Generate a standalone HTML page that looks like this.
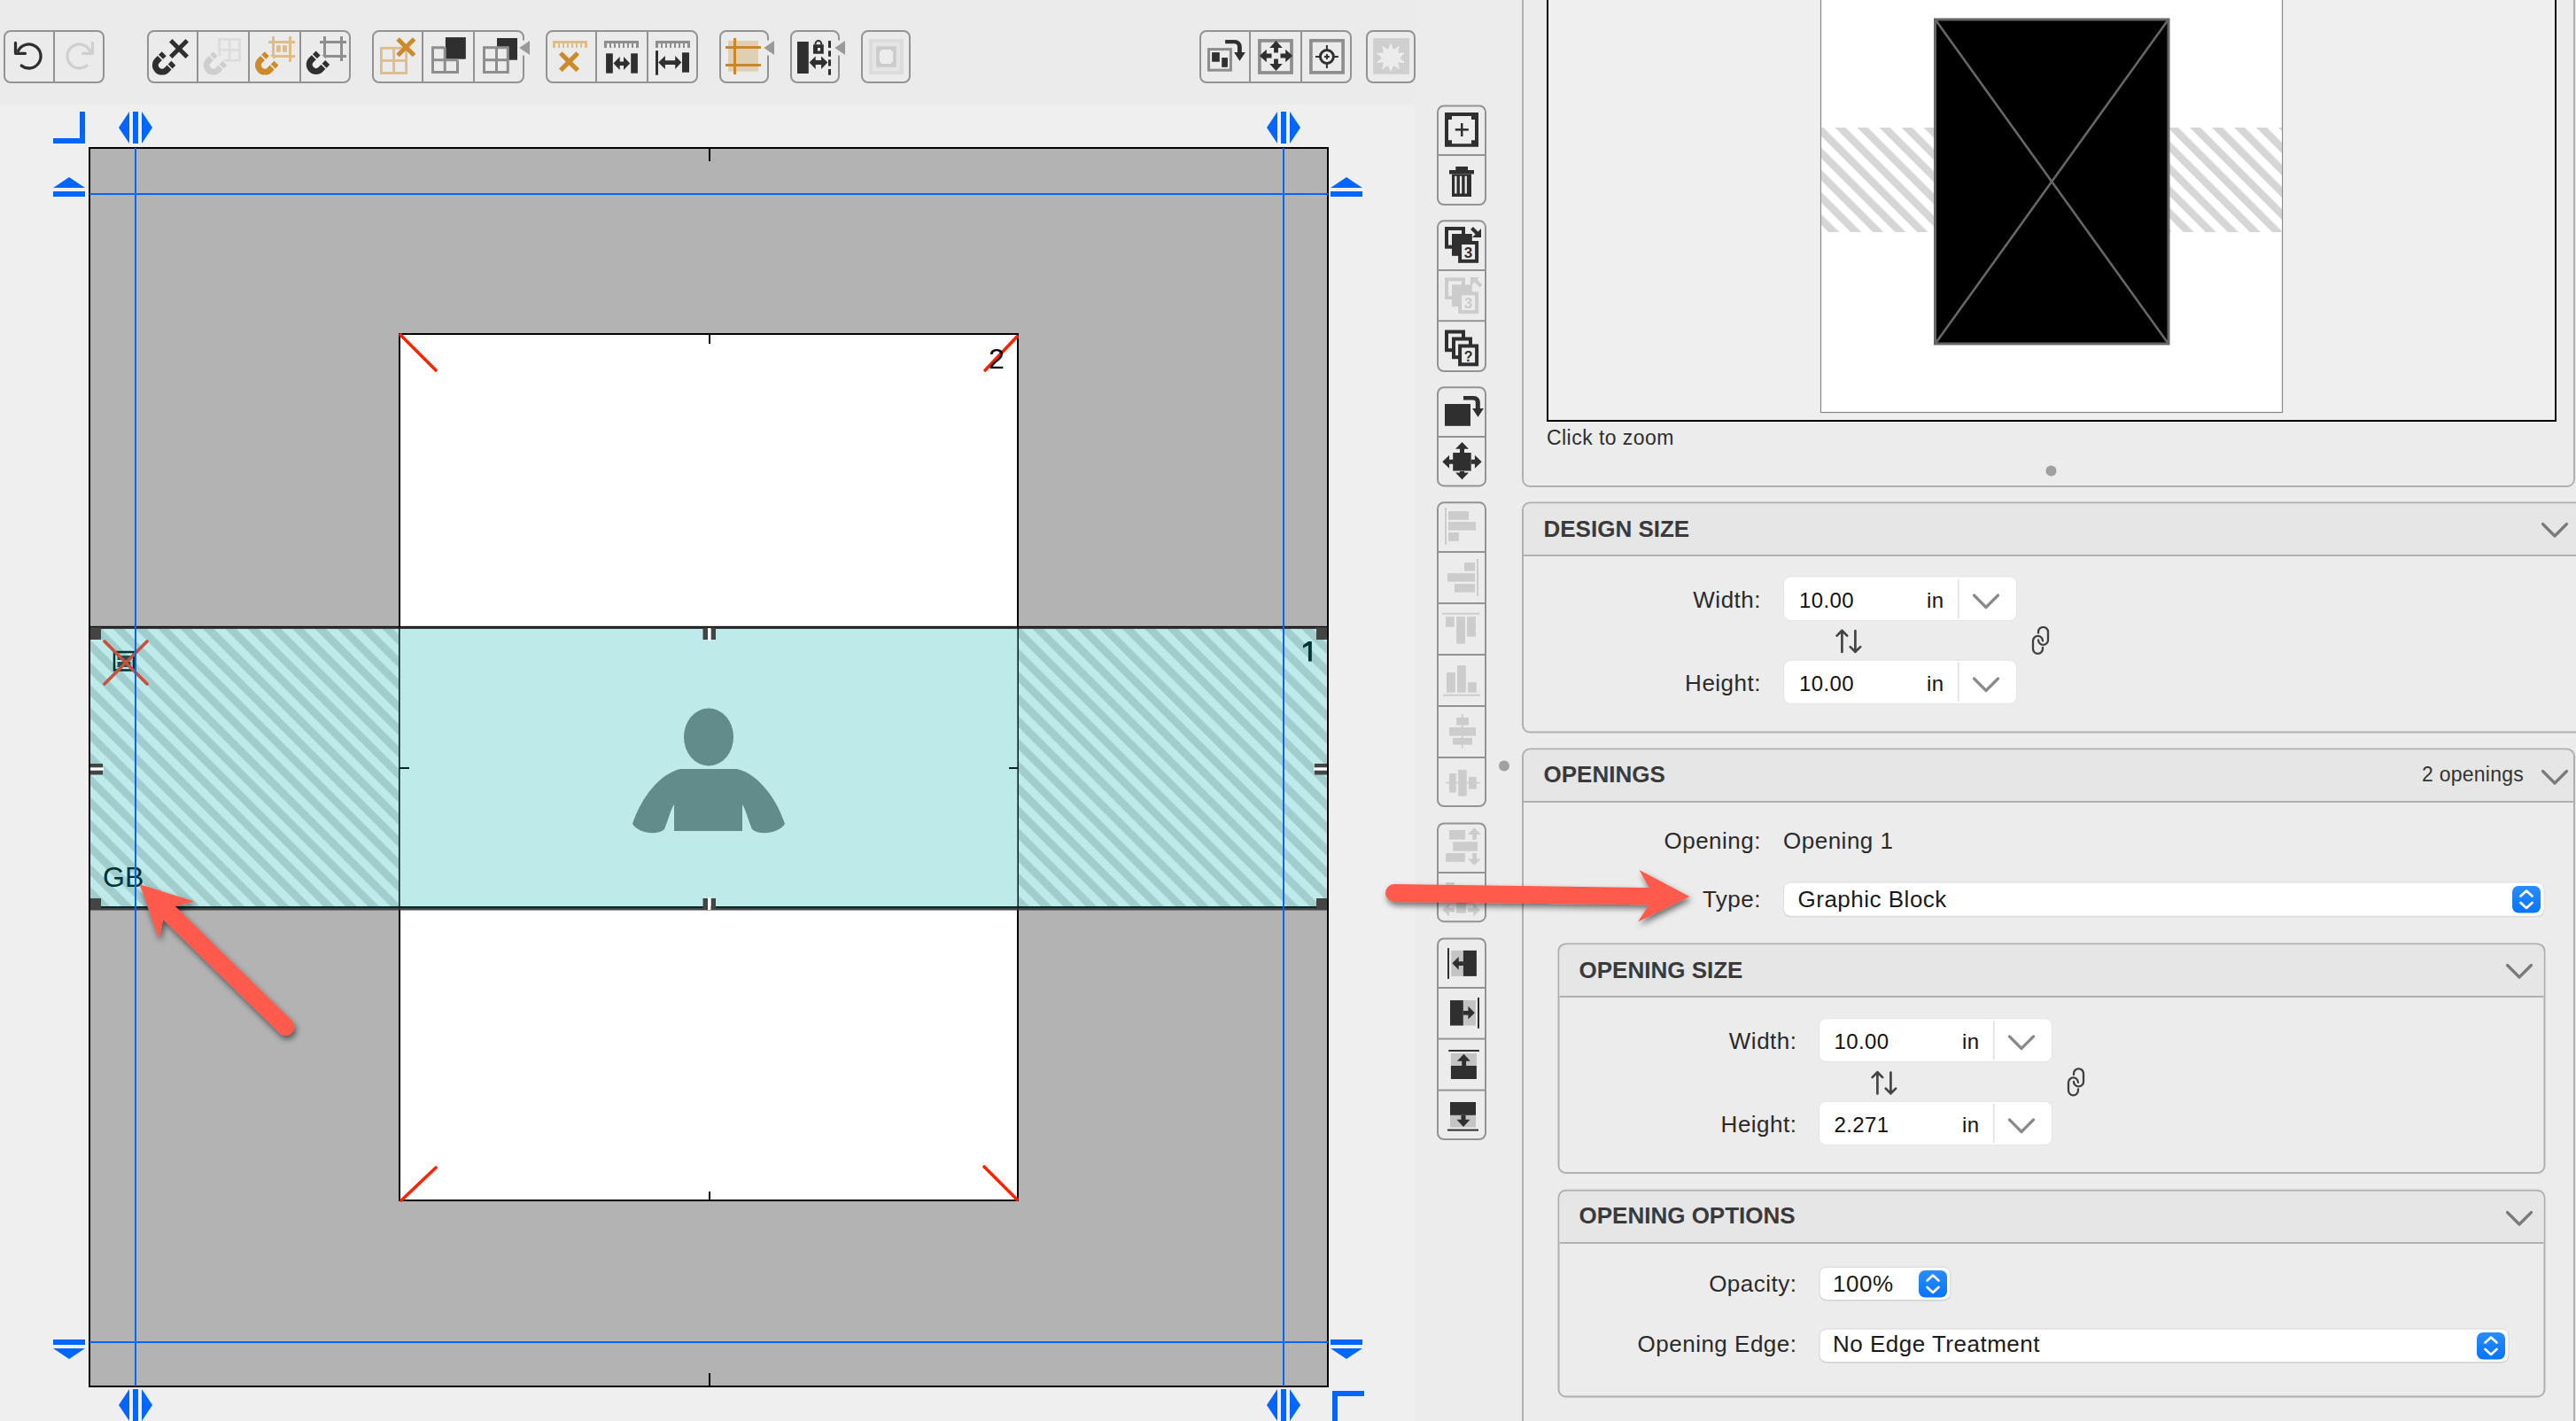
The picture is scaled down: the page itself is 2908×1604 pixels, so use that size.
<!DOCTYPE html>
<html><head><meta charset="utf-8">
<style>
html,body{margin:0;padding:0;width:2908px;height:1604px;overflow:hidden;background:#ececec;}
svg{display:block;position:absolute;left:0;top:0;}
text{font-family:"Liberation Sans",sans-serif;}
</style></head>
<body>
<svg width="2908" height="1604" viewBox="0 0 2908 1604">
<defs>
  <pattern id="stripeC" patternUnits="userSpaceOnUse" width="17.9" height="17.9" patternTransform="rotate(-45)">
    <rect width="17.9" height="17.9" fill="#bfeaea"/>
    <rect x="0" width="8.8" height="17.9" fill="#a2cdcd"/>
  </pattern>
  <pattern id="stripeG" patternUnits="userSpaceOnUse" width="17.7" height="17.7" patternTransform="rotate(-45)">
    <rect width="17.7" height="17.7" fill="#ffffff"/>
    <rect x="0" width="8.5" height="17.7" fill="#d6d6d6"/>
  </pattern>
  <filter id="ashadow" x="-20%" y="-20%" width="140%" height="140%">
    <feGaussianBlur in="SourceAlpha" stdDeviation="3.5"/>
    <feOffset dx="2" dy="4" result="b"/>
    <feComponentTransfer><feFuncA type="linear" slope="0.55"/></feComponentTransfer>
    <feMerge><feMergeNode/><feMergeNode in="SourceGraphic"/></feMerge>
  </filter>

  <symbol id="magnet" overflow="visible">
    <g transform="rotate(-45)">
      <path d="M0,-11 A11,11 0 0 0 0,11 L4,11 L4,4 L0,4 A4,4 0 0 1 0,-4 L4,-4 L4,-11 Z"/>
      <rect x="5.6" y="-11" width="5.2" height="7"/>
      <rect x="5.6" y="4" width="5.2" height="7"/>
    </g>
  </symbol>
  <symbol id="magnetHalo" overflow="visible">
    <g transform="rotate(-45)" fill="#ececec">
      <path d="M0,-12.5 A12.5,12.5 0 0 0 0,12.5 L12.3,12.5 L12.3,-12.5 Z"/>
    </g>
  </symbol>
  <symbol id="xmark" overflow="visible">
    <path d="M-11,-7.5 L-7.5,-11 L0,-3.5 L7.5,-11 L11,-7.5 L3.5,0 L11,7.5 L7.5,11 L0,3.5 L-7.5,11 L-11,7.5 L-3.5,0 Z"/>
  </symbol>
</defs>

<!-- ========== BACKGROUNDS ========== -->
<rect x="0" y="0" width="2908" height="1604" fill="#ececec"/>
<rect x="0" y="0" width="1598" height="118" fill="#ebebeb"/>
<rect x="0" y="118" width="1598" height="1486" fill="#efefef"/>


<!-- ========== TOP TOOLBAR ========== -->
<g id="toolbar">
  <g fill="none" stroke="#939393" stroke-width="2">
    <rect x="5" y="35" width="112" height="58" rx="7"/>
    <rect x="167" y="35" width="228" height="58" rx="7"/>
    <rect x="421" y="35" width="170" height="58" rx="7"/>
    <rect x="617" y="35" width="170" height="58" rx="7"/>
    <rect x="813" y="35" width="54" height="58" rx="7"/>
    <rect x="893" y="35" width="54" height="58" rx="7"/>
    <rect x="973" y="35" width="54" height="58" rx="7"/>
    <rect x="1355" y="35" width="170" height="58" rx="7"/>
    <rect x="1543" y="35" width="54" height="58" rx="7"/>
  </g>
  <g fill="#939393">
    <rect x="60" y="35" width="2" height="58"/>
    <rect x="222" y="35" width="2" height="58"/>
    <rect x="280" y="35" width="2" height="58"/>
    <rect x="338" y="35" width="2" height="58"/>
    <rect x="476" y="35" width="2" height="58"/>
    <rect x="534" y="35" width="2" height="58"/>
    <rect x="672" y="35" width="2" height="58"/>
    <rect x="730" y="35" width="2" height="58"/>
    <rect x="1410" y="35" width="2" height="58"/>
    <rect x="1468" y="35" width="2" height="58"/>
  </g>
  <!-- gaps + triangles -->
  <g fill="#ebebeb">
    <rect x="588" y="45.5" width="6" height="17"/>
    <rect x="864" y="45.5" width="6" height="17"/>
    <rect x="944" y="45.5" width="6" height="17"/>
  </g>
  <g fill="#999">
    <path d="M586.2,54 L598,46 L598,62 Z"/>
    <path d="M862.4,54 L874,46 L874,62 Z"/>
    <path d="M942.4,54 L954,46 L954,62 Z"/>
  </g>

  <!-- undo / redo -->
  <g fill="none" stroke-width="3.3" stroke-linecap="round" stroke-linejoin="round">
    <g stroke="#2e2e2e">
      <path d="M24.2,74.1 A13.5,13.5 0 1 0 20.5,57.4"/>
      <path d="M17.5,48.5 L17.5,60.3 L28.5,60.3"/>
    </g>
    <g stroke="#cfcfcf">
      <path d="M97.8,74.1 A13.5,13.5 0 1 1 101.5,57.4"/>
      <path d="M104.5,48.5 L104.5,60.3 L93.5,60.3"/>
    </g>
  </g>

  <!-- magnets group -->
  <g>
    <g fill="#2f2f2f"><use href="#xmark" x="202" y="55"/></g>
    <g fill="#2f2f2f"><use href="#magnet" x="182.9" y="73.6"/></g>
    <!-- btn2 disabled -->
    <g fill="none" stroke="#dcdcdc" stroke-width="2.7">
      <rect x="247.5" y="44.3" width="23" height="24"/>
      <line x1="259.2" y1="44.3" x2="259.2" y2="68.3"/>
      <line x1="247.5" y1="56.3" x2="270.5" y2="56.3"/>
    </g>
    <use href="#magnetHalo" x="240.8" y="73.6"/>
    <g fill="#cecece"><use href="#magnet" x="240.8" y="73.6"/></g>
    <!-- btn3 orange -->
    <g fill="#dfbd8a">
      <rect x="307" y="41" width="3" height="29"/>
      <rect x="326" y="41" width="3" height="29"/>
      <rect x="303" y="46" width="30" height="3"/>
      <rect x="303" y="62" width="30" height="3"/>
      <rect x="312" y="51.2" width="4.8" height="7.6"/>
      <rect x="319" y="51.2" width="5" height="7.6"/>
    </g>
    <use href="#magnetHalo" x="299" y="73.6"/>
    <g fill="#cc8a2c"><use href="#magnet" x="299" y="73.6"/></g>
    <!-- btn4 -->
    <g fill="#8e8e8e">
      <rect x="365" y="41" width="3" height="28"/>
      <rect x="384" y="41" width="3" height="28"/>
      <rect x="361" y="46" width="30" height="3"/>
      <rect x="361" y="62" width="30" height="3"/>
    </g>
    <use href="#magnetHalo" x="356.8" y="72.9"/>
    <g fill="#2f2f2f"><use href="#magnet" x="356.8" y="72.9"/></g>
  </g>

  <!-- grid group -->
  <g>
    <g fill="none" stroke="#dfbd8a" stroke-width="2.8">
      <rect x="430.4" y="54.3" width="28.2" height="28.2"/>
      <line x1="444.6" y1="54.3" x2="444.6" y2="82.5"/>
      <line x1="430.4" y1="68.4" x2="458.6" y2="68.4"/>
    </g>
    <g fill="#cc8a2c"><use href="#xmark" x="458.3" y="53.2"/></g>
    <rect x="502.9" y="42.1" width="22.9" height="24.6" fill="#2f2f2f"/>
    <g fill="none" stroke="#8e8e8e" stroke-width="3">
      <path d="M502.2,53.7 L488.5,53.7 L488.5,81.5 L516.5,81.5 L516.5,67.7"/>
      <line x1="502.2" y1="53.7" x2="502.2" y2="81.5"/>
      <line x1="488.5" y1="67.7" x2="516.5" y2="67.7"/>
    </g>
    <rect x="561" y="43" width="23" height="24.7" fill="#2f2f2f"/>
    <g fill="none" stroke="#8e8e8e" stroke-width="3">
      <rect x="546.5" y="53.7" width="26.8" height="27.8" fill="#ececec"/>
      <line x1="560.5" y1="53.7" x2="560.5" y2="81.5"/>
      <line x1="546.5" y1="67.7" x2="573.3" y2="67.7"/>
    </g>
  </g>

  <!-- ruler group -->
  <g>
    <g fill="#dfbd8a">
      <rect x="624" y="46" width="39" height="3"/>
      <rect x="624" y="46" width="3" height="8"/><rect x="630" y="46" width="2" height="8"/><rect x="635" y="46" width="2" height="8"/><rect x="640" y="46" width="2" height="8"/><rect x="645" y="46" width="2" height="8"/><rect x="650" y="46" width="2" height="8"/><rect x="655" y="46" width="2" height="8"/><rect x="660" y="46" width="3" height="8"/>
    </g>
    <g fill="#cc8a2c"><use href="#xmark" x="642.5" y="69.7" transform="translate(642.5,69.7) scale(1.05) translate(-642.5,-69.7)"/></g>
    <g fill="#8e8e8e">
      <rect x="682" y="46" width="39" height="3"/>
      <rect x="682" y="46" width="3" height="8"/><rect x="688" y="46" width="2" height="8"/><rect x="693" y="46" width="2" height="8"/><rect x="698" y="46" width="2" height="8"/><rect x="703" y="46" width="2" height="8"/><rect x="708" y="46" width="2" height="8"/><rect x="713" y="46" width="2" height="8"/><rect x="718" y="46" width="3" height="8"/>
      <rect x="740" y="46" width="39" height="3"/>
      <rect x="740" y="46" width="3" height="8"/><rect x="746" y="46" width="2" height="8"/><rect x="751" y="46" width="2" height="8"/><rect x="756" y="46" width="2" height="8"/><rect x="761" y="46" width="2" height="8"/><rect x="766" y="46" width="2" height="8"/><rect x="771" y="46" width="2" height="8"/><rect x="776" y="46" width="3" height="8"/>
    </g>
    <g fill="#2f2f2f">
      <rect x="684.1" y="60.3" width="7.7" height="22.4"/>
      <rect x="712.2" y="60.3" width="7.7" height="22.4"/>
      <path d="M692.5,71.6 L699.7,64 L699.7,69.4 L704,69.4 L704,64 L711.2,71.6 L704,79 L704,74.1 L699.7,74.1 L699.7,79 Z"/>
      <rect x="740" y="57.1" width="3" height="27.6"/>
      <rect x="770" y="59.3" width="8" height="22.4"/>
      <path d="M743.2,70.6 L750.9,63 L750.9,68.2 L762.2,68.2 L762.2,63 L769.3,70.6 L762.2,78 L762.2,72.9 L750.9,72.9 L750.9,78 Z"/>
    </g>
  </g>

  <!-- btn A -->
  <rect x="822" y="46" width="34" height="34.7" fill="#e0d0b3"/>
  <g fill="#c9862a">
    <rect x="828" y="43" width="3" height="41"/>
    <rect x="819" y="52" width="40" height="3"/>
    <rect x="819" y="72" width="40" height="3"/>
  </g>
  <!-- btn B -->
  <g fill="#2f2f2f">
    <rect x="900" y="47" width="12.8" height="36"/>
    <path d="M919.5,50.5 L919.5,49.5 A4.4,4.4 0 0 1 928.3,49.5 L928.3,50.5 L926.3,50.5 L926.3,49.5 A2.4,2.4 0 0 0 921.5,49.5 L921.5,50.5 Z"/>
    <path d="M918,50.2 h11.8 v10.6 h-11.8 Z M923,54 v3.5 h3 v-3.5 Z" fill-rule="evenodd"/>
    <path d="M913.6,70.4 L920.7,63.5 L920.7,68 L927.1,68 L927.1,63.5 L934.3,70.4 L927.1,78 L927.1,72.9 L920.7,72.9 L920.7,78 Z"/>
    <rect x="935" y="46" width="3" height="8"/>
    <rect x="935" y="57.3" width="3" height="6.5"/>
    <rect x="935" y="67.3" width="3" height="7.2"/>
    <rect x="935" y="78" width="3" height="6.7"/>
  </g>
  <!-- btn C disabled -->
  <rect x="981" y="44" width="39" height="40" fill="#dcdcdc"/>
  <rect x="985" y="48" width="31" height="32" fill="#e5e5e5"/>
  <rect x="989.1" y="52.2" width="22.7" height="23.6" fill="#cccccc"/>
  <path d="M994.8,55.9 h11.3 v2 h2 v12.2 h-2 v2 h-11.3 v-2 h-2 v-12.2 h2 Z" fill="#ececec"/>

  <!-- R1 -->
  <g>
    <rect x="1364.5" y="55.6" width="24.9" height="23.6" fill="none" stroke="#8e8e8e" stroke-width="3"/>
    <g fill="#2f2f2f">
      <rect x="1368.1" y="59.1" width="8.7" height="10.6"/>
      <rect x="1379.2" y="65.1" width="6.7" height="10.7"/>
      <path d="M1383.1,45 L1394,45 A7.8,7.8 0 0 1 1401.8,52.8 L1401.8,60 L1397,60 L1397,53 A3.8,3.8 0 0 0 1393.2,49.2 L1383.1,49.2 Z"/>
      <path d="M1393.1,59.1 L1405.9,59.1 L1399.4,68.7 Z"/>
    </g>
  </g>
  <!-- R2 -->
  <g>
    <rect x="1421.9" y="45.9" width="36.1" height="36.1" fill="none" stroke="#8e8e8e" stroke-width="3.7"/>
    <path fill="#2f2f2f" d="M1440.5,46 L1447.8,53.9 L1442.9,53.9 L1442.9,59.6 L1438.1,59.6 L1438.1,53.9 L1433.2,53.9 Z
      M1440.5,80 L1447.8,72.1 L1442.9,72.1 L1442.9,66.4 L1438.1,66.4 L1438.1,72.1 L1433.2,72.1 Z
      M1421.9,63 L1429.8,55.7 L1429.8,60.6 L1435.5,60.6 L1435.5,65.4 L1429.8,65.4 L1429.8,70.3 Z
      M1459.1,63 L1451.2,55.7 L1451.2,60.6 L1445.5,60.6 L1445.5,65.4 L1451.2,65.4 L1451.2,70.3 Z"/>
  </g>
  <!-- R3 -->
  <g>
    <rect x="1479.9" y="45.8" width="36.2" height="36.1" fill="none" stroke="#8e8e8e" stroke-width="3.7"/>
    <circle cx="1497.9" cy="64" r="7.5" fill="none" stroke="#2f2f2f" stroke-width="3"/>
    <g stroke="#2f2f2f" stroke-width="2">
      <line x1="1497.9" y1="51" x2="1497.9" y2="55.5"/>
      <line x1="1497.9" y1="72.5" x2="1497.9" y2="77"/>
      <line x1="1485" y1="64" x2="1489.5" y2="64"/>
      <line x1="1506.3" y1="64" x2="1510.8" y2="64"/>
      <line x1="1497.9" y1="61" x2="1497.9" y2="67"/>
      <line x1="1494.9" y1="64" x2="1500.9" y2="64"/>
    </g>
  </g>
  <!-- R4 disabled -->
  <rect x="1550.2" y="43.1" width="40.8" height="40.6" fill="#cfcfcf"/>
  <path fill="#ececec" d="M1570,48.5 L1573.1,56.1 L1579.8,51.6 L1578.2,59.5 L1586.2,59.7 L1580.3,65.2 L1586.2,70.9 L1578.3,70.4 L1579.9,78.4 L1573.2,73.9 L1570,81.2 L1566.8,73.9 L1560.1,78.4 L1561.7,70.4 L1553.8,70.9 L1559.7,65.2 L1553.8,59.7 L1561.8,59.5 L1560.2,51.6 L1566.9,56.1 Z"/>
</g>

<!-- ========== CANVAS ========== -->
<g id="canvas">
  <rect x="101" y="167" width="1398" height="1398" fill="#b3b3b3" stroke="#000" stroke-width="2"/>
  <!-- white opening 2 -->
  <rect x="451" y="377" width="698" height="978" fill="#fff" stroke="#000" stroke-width="2"/>
  <!-- band opening 1 -->
  <rect x="102" y="708" width="348" height="319" fill="url(#stripeC)"/>
  <rect x="1150" y="708" width="348" height="319" fill="url(#stripeC)"/>
  <rect x="450" y="708" width="700" height="319" fill="#bfeaea"/>
  <rect x="102" y="708" width="1396" height="2" fill="#444"/><rect x="102" y="706.8" width="1396" height="1.4" fill="#000"/>
  <rect x="114" y="1023" width="1372" height="2" fill="#0a2828"/>
  <rect x="102" y="1025" width="1396" height="2.5" fill="#444"/>
  <rect x="450" y="708" width="1.6" height="318" fill="#0a2424"/>
  <rect x="1148.4" y="708" width="1.6" height="318" fill="#0a2424"/>

  <!-- ticks -->
  <rect x="800" y="167" width="2" height="15" fill="#000"/>
  <rect x="800" y="1550" width="2" height="15" fill="#000"/>
  <rect x="800" y="377" width="2" height="11" fill="#000"/>
  <rect x="800" y="1345" width="2" height="10" fill="#000"/>
  <!-- red corner marks -->
  <g stroke="#ff2200" stroke-width="3.6" stroke-linecap="round">
    <line x1="452" y1="378" x2="492" y2="418"/>
    <line x1="1148" y1="380" x2="1112" y2="418"/>
    <line x1="453" y1="1355" x2="492" y2="1318"/>
    <line x1="1148" y1="1354" x2="1111" y2="1317"/>
  </g>
  <text x="1116" y="416" font-size="32" fill="#000">2</text>
  <!-- band handles -->
  <g fill="#444">
    <rect x="102" y="708" width="12" height="14"/>
    <rect x="102" y="1014" width="12" height="13"/>
    <rect x="1486" y="708" width="12" height="14"/>
    <rect x="1486" y="1014" width="12" height="13"/>
    <rect x="793.5" y="709" width="5.5" height="13"/>
    <rect x="802.5" y="709" width="5.5" height="13"/>
    <rect x="793.5" y="1014" width="5.5" height="13"/>
    <rect x="802.5" y="1014" width="5.5" height="13"/>
    <rect x="102" y="862" width="14" height="4.5"/>
    <rect x="102" y="869.5" width="14" height="5"/>
    <rect x="1484" y="862" width="14" height="4.5"/>
    <rect x="1484" y="869.5" width="14" height="5"/>
  </g>
  <rect x="102" y="866.5" width="15" height="3" fill="#fff"/>
  <rect x="1483" y="866.5" width="15" height="3" fill="#fff"/>
  <rect x="799" y="709" width="3.5" height="14" fill="#fff"/>
  <rect x="799" y="1013" width="3.5" height="14" fill="#fff"/>
  <rect x="451" y="866" width="11" height="2" fill="#0a2424"/>
  <rect x="1139" y="866" width="11" height="2" fill="#0a2424"/>
  <!-- person -->
  <g fill="#628c8c">
    <ellipse cx="800" cy="832" rx="28" ry="32.5"/>
    <path d="M768,868 L832,868 C858,874 878,905 886,930 C880,940 858,944 849,936 C844,924 842,914 838,908 L838,938 L761,938 L761,908 C757,914 755,924 750,936 C741,944 720,940 714,930 C722,905 742,874 768,868 Z"/>
  </g>
  <!-- GB icon -->
  <g>
    <rect x="129" y="736" width="22" height="20.5" fill="none" stroke="#003333" stroke-width="2.5"/>
    <rect x="132.5" y="740" width="15" height="5" fill="#1d4d4d"/>
    <rect x="132.5" y="747" width="15" height="6" fill="#1d4d4d"/>
    <g stroke="#c8503c" stroke-width="3.6" stroke-linecap="round">
      <line x1="118" y1="724" x2="166" y2="772"/>
      <line x1="166" y1="724" x2="118" y2="772"/>
    </g>
  </g>
  <text x="116" y="1001" font-size="32" fill="#003333">GB</text>
  <path d="M1477,724 L1480.8,724 L1480.8,746.4 L1477,746.4 L1477,728.5 L1471,731.5 L1471,728.2 Z" fill="#003333"/>
  <!-- blue guides -->
  <g fill="#0066ff">
    <rect x="152" y="167" width="2" height="1398"/>
    <rect x="1448" y="167" width="2" height="1398"/>
    <rect x="101" y="218" width="1398" height="2"/>
    <rect x="101" y="1514" width="1398" height="2"/>
    <!-- corner marks -->
    <rect x="60" y="156" width="36" height="6"/>
    <rect x="90" y="126" width="6" height="36"/>
    <rect x="1504" y="1570" width="36" height="6"/>
    <rect x="1504" y="1570" width="6" height="34"/>
    <!-- top handles -->
    <path d="M134,144 L146,126 L146,162 Z M150,126 h6 v36 h-6 Z M160,126 L172,144 L160,162 Z"/>
    <path d="M1430,144 L1442,126 L1442,162 Z M1446,126 h6 v36 h-6 Z M1456,126 L1468,144 L1456,162 Z"/>
    <!-- bottom handles -->
    <path d="M134,1586 L146,1568 L146,1604 Z M150,1568 h6 v36 h-6 Z M160,1568 L172,1586 L160,1604 Z"/>
    <path d="M1430,1586 L1442,1568 L1442,1604 Z M1446,1568 h6 v36 h-6 Z M1456,1568 L1468,1586 L1456,1604 Z"/>
    <!-- left/right handles top -->
    <path d="M60,212 L78,200 L96,212 Z M60,216 h36 v6 h-36 Z"/>
    <path d="M1502,212 L1520,200 L1538,212 Z M1502,216 h36 v6 h-36 Z"/>
    <!-- left/right handles bottom -->
    <path d="M60,1512 h36 v6 h-36 Z M60,1522 L96,1522 L78,1534 Z"/>
    <path d="M1502,1512 h36 v6 h-36 Z M1502,1522 L1538,1522 L1520,1534 Z"/>
  </g>
  <!-- annotation arrow (canvas) -->
  <g filter="url(#ashadow)" fill="#ff5a4b">
    <path d="M157.6,998.2 L219.5,1017.4 L197.7,1023 L330.5,1153.3 A10,10 0 0 1 316.7,1167.3 L184.3,1037.9 L179.4,1059.7 Z"/>
  </g>

</g>

<!-- ========== VERTICAL TOOLBAR ========== -->
<g id="vtoolbar">
  <g fill="none" stroke="#939393" stroke-width="2">
    <rect x="1623" y="119.5" width="54" height="111.5" rx="7"/>
    <rect x="1623" y="249.3" width="54" height="169.7" rx="7"/>
    <rect x="1623" y="437.2" width="54" height="111.2" rx="7"/>
    <rect x="1623" y="567.3" width="54" height="342.7" rx="7"/>
    <rect x="1623" y="929.5" width="54" height="110.7" rx="7"/>
    <rect x="1623" y="1059.4" width="54" height="226.7" rx="7"/>
  </g>
  <g fill="#939393">
    <rect x="1623" y="174" width="54" height="2"/>
    <rect x="1623" y="304" width="54" height="2"/>
    <rect x="1623" y="361.2" width="54" height="2"/>
    <rect x="1623" y="492" width="54" height="2"/>
    <rect x="1623" y="622" width="54" height="2"/>
    <rect x="1623" y="680" width="54" height="2"/>
    <rect x="1623" y="738" width="54" height="2"/>
    <rect x="1623" y="796" width="54" height="2"/>
    <rect x="1623" y="854" width="54" height="2"/>
    <rect x="1623" y="984" width="54" height="2"/>
    <rect x="1623" y="1114" width="54" height="2"/>
    <rect x="1623" y="1171.6" width="54" height="2"/>
    <rect x="1623" y="1229.6" width="54" height="2"/>
  </g>
  <!-- add -->
  <g fill="#2f2f2f">
    <path fill-rule="evenodd" d="M1631,127 h38 v38.7 h-38 Z M1639,131 h22 v4 h4 v23.2 h-4 v4 h-22 v-4 h-4 v-23.2 h4 Z"/>
    <rect x="1649" y="139" width="2.5" height="15"/>
    <rect x="1642.8" y="145.1" width="15" height="2.5"/>
  </g>
  <!-- trash -->
  <g fill="#2f2f2f">
    <rect x="1643.3" y="188" width="13.7" height="4"/>
    <rect x="1636" y="192" width="28" height="4.5"/>
    <path fill-rule="evenodd" d="M1639,196.5 h22 v25.5 h-22 Z M1642.2,198.8 v19.8 h2.3 v-19.8 Z M1647.9,198.8 v19.8 h2.3 v-19.8 Z M1653.6,198.8 v19.8 h2.3 v-19.8 Z"/>
  </g>
  <!-- layers btn 1 -->
  <g>
    <rect x="1633" y="258" width="19" height="20.7" fill="none" stroke="#2f2f2f" stroke-width="4"/>
    <rect x="1639" y="264" width="22.8" height="24.8" fill="#2f2f2f"/>
    <rect x="1648.1" y="274" width="19" height="20.8" fill="#ececec" stroke="#2f2f2f" stroke-width="4"/>
    <text x="1657.6" y="291" font-size="17" font-weight="700" fill="#2f2f2f" text-anchor="middle">3</text>
    <path d="M1661.5,257.5 L1667.5,263.5" stroke="#2f2f2f" stroke-width="4"/>
    <path d="M1672,258 L1672,268 L1662,268 Z" fill="#2f2f2f"/>
  </g>
  <!-- layers btn 2 disabled -->
  <g>
    <rect x="1633" y="315.3" width="19" height="20.7" fill="none" stroke="#cccccc" stroke-width="4"/>
    <rect x="1639" y="321.3" width="22.8" height="24.8" fill="#cccccc"/>
    <rect x="1648.1" y="331.3" width="19" height="20.8" fill="#ececec" stroke="#cccccc" stroke-width="4"/>
    <text x="1657.6" y="348.3" font-size="17" font-weight="700" fill="#cccccc" text-anchor="middle">3</text>
    <path d="M1672,323 L1666,317" stroke="#cccccc" stroke-width="4"/>
    <path d="M1660,313 L1670,313 L1660,323 Z" fill="#cccccc"/>
  </g>
  <!-- layers btn 3 -->
  <g fill="#ececec" stroke="#2f2f2f" stroke-width="4">
    <rect x="1633" y="374.5" width="19" height="20.7"/>
    <rect x="1641" y="382.5" width="19" height="20.7"/>
    <rect x="1648.1" y="390.5" width="19" height="20.8"/>
  </g>
  <text x="1657.6" y="407.5" font-size="16" font-weight="700" fill="#2f2f2f" text-anchor="middle">?</text>
  <!-- rotate -->
  <g fill="#2f2f2f">
    <rect x="1631" y="456" width="29" height="24.8"/>
    <path d="M1652,447 L1664,447 A6.8,6.8 0 0 1 1670.8,453.8 L1670.8,462 L1665.8,462 L1665.8,454.5 A3,3 0 0 0 1662.8,451.5 L1652,451.5 Z"/>
    <path d="M1662.1,461.1 L1674.9,461.1 L1668.5,470.7 Z"/>
  </g>
  <!-- move -->
  <path fill="#2f2f2f" d="M1640.2,511 h20.5 v20.6 h-20.5 Z
    M1650.5,499 L1658,506.8 L1653,506.8 L1653,511.5 L1648,511.5 L1648,506.8 L1643,506.8 Z
    M1650.5,541.2 L1658,533.4 L1653,533.4 L1653,531 L1648,531 L1648,533.4 L1643,533.4 Z
    M1628.3,521.3 L1636.1,513.8 L1636.1,518.8 L1640.5,518.8 L1640.5,523.8 L1636.1,523.8 L1636.1,528.8 Z
    M1672.7,521.3 L1664.9,513.8 L1664.9,518.8 L1660.5,518.8 L1660.5,523.8 L1664.9,523.8 L1664.9,528.8 Z"/>
  <!-- align (disabled) -->
  <g fill="#cccccc">
    <rect x="1631" y="573" width="2" height="41.8"/>
    <rect x="1635" y="577.1" width="23" height="9.7"/>
    <rect x="1635" y="589.1" width="31" height="9.5"/>
    <rect x="1635" y="601.1" width="11.9" height="9.8"/>

    <rect x="1667" y="631" width="2" height="41.7"/>
    <rect x="1653" y="635" width="12" height="9.6"/>
    <rect x="1634" y="647.1" width="31" height="9.5"/>
    <rect x="1642" y="659.1" width="23" height="9.5"/>

    <rect x="1628" y="691.7" width="42" height="2"/>
    <rect x="1632.1" y="696.1" width="9.7" height="11.6"/>
    <rect x="1644.1" y="696.1" width="9.8" height="30.6"/>
    <rect x="1656.1" y="696.1" width="9.8" height="22.5"/>

    <rect x="1629" y="783.8" width="41.8" height="2"/>
    <rect x="1633" y="759.1" width="9.8" height="22.6"/>
    <rect x="1645" y="751" width="9.8" height="30.7"/>
    <rect x="1657.1" y="770.1" width="9.7" height="11.6"/>

    <rect x="1650" y="806" width="1.6" height="38.6"/>
    <rect x="1644.1" y="809.9" width="13.9" height="8.7"/>
    <rect x="1636" y="821.1" width="30" height="9.5"/>
    <rect x="1640" y="832.9" width="22" height="7.7"/>

    <rect x="1631.7" y="882.8" width="39.1" height="1.6"/>
    <rect x="1636" y="873" width="7.7" height="21.6"/>
    <rect x="1646.1" y="868.9" width="9.6" height="29.7"/>
    <rect x="1658" y="876.9" width="8.8" height="13.7"/>

    <!-- distribute -->
    <rect x="1636" y="937" width="17.9" height="10.6"/>
    <rect x="1640.2" y="950.2" width="27.7" height="10.5"/>
    <rect x="1632.1" y="963" width="21.8" height="9.9"/>
    <path d="M1664.4,934.2 L1671.9,942 L1667,942 L1667,947.7 L1662.1,947.7 L1662.1,942 L1656.9,942 Z"/>
    <path d="M1664.4,976.7 L1671.9,969.4 L1667,969.4 L1667,963 L1662.1,963 L1662.1,969.4 L1656.9,969.4 Z"/>
    <rect x="1632.1" y="996" width="9.9" height="8"/>
    <rect x="1644.1" y="1006" width="10.9" height="24.7"/>
    <path d="M1628.3,1027 L1636,1019.5 L1636,1024.7 L1642,1024.7 L1642,1029.5 L1636,1029.5 L1636,1034.5 Z"/>
    <path d="M1671,1027 L1663.3,1019.5 L1663.3,1024.7 L1657,1024.7 L1657,1029.5 L1663.3,1029.5 L1663.3,1034.5 Z"/>
  </g>
  <!-- move to edges -->
  <g>
    <rect x="1638.2" y="1072.9" width="13.7" height="29" fill="#c4c4c4"/>
    <rect x="1651.9" y="1072.9" width="15" height="29" fill="#2f2f2f"/>
    <rect x="1634" y="1070.2" width="2" height="34.7" fill="#2f2f2f"/>
    <path fill="#2f2f2f" d="M1639.3,1087.3 L1646.7,1079.9 L1646.7,1085.2 L1651.9,1085.2 L1651.9,1090.1 L1646.7,1090.1 L1646.7,1094.8 Z"/>

    <rect x="1637" y="1129.1" width="14.9" height="28.5" fill="#2f2f2f"/>
    <rect x="1651.9" y="1129.1" width="14.1" height="28.5" fill="#c4c4c4"/>
    <rect x="1668" y="1126" width="2" height="34.8" fill="#2f2f2f"/>
    <path fill="#2f2f2f" d="M1664.8,1143.2 L1657.4,1135.8 L1657.4,1141 L1651.9,1141 L1651.9,1145.7 L1657.4,1145.7 L1657.4,1150.6 Z"/>

    <rect x="1637.9" y="1188.9" width="29" height="14.1" fill="#c4c4c4"/>
    <rect x="1637.9" y="1203" width="29" height="15" fill="#2f2f2f"/>
    <rect x="1635.2" y="1185" width="34.7" height="2" fill="#2f2f2f"/>
    <path fill="#2f2f2f" d="M1652.5,1189.8 L1659.8,1197.7 L1655.1,1197.7 L1655.1,1203 L1650.2,1203 L1650.2,1197.7 L1644.9,1197.7 Z"/>

    <rect x="1637" y="1244" width="29" height="14.9" fill="#2f2f2f"/>
    <rect x="1637" y="1258.9" width="29" height="13.6" fill="#c4c4c4"/>
    <rect x="1634" y="1274.6" width="35" height="2" fill="#2f2f2f"/>
    <path fill="#2f2f2f" d="M1652,1272 L1659.5,1263.7 L1654.5,1263.7 L1654.5,1258.9 L1649.5,1258.9 L1649.5,1263.7 L1644.5,1263.7 Z"/>
  </g>
  <circle cx="1698" cy="864.6" r="6" fill="#a0a0a0"/>
</g>

<!-- ========== RIGHT PANEL ========== -->
<g id="panel">
  <!-- top preview section -->
  <path d="M1719,-10 L1719,541 A8,8 0 0 0 1727,549 L2898,549 A8,8 0 0 0 2906,541 L2906,-10" fill="#ececec" stroke="#b0b0b0" stroke-width="2"/>
  <rect x="1747" y="-10" width="1138" height="485" fill="#efefef" stroke="#000" stroke-width="2"/>
  <rect x="2055.5" y="-10" width="521" height="475.5" fill="#fff" stroke="#888" stroke-width="1.2"/>
  <rect x="2056" y="144" width="520" height="118" fill="url(#stripeG)"/>
  <rect x="2184.5" y="22" width="263.5" height="366" fill="#000" stroke="#666" stroke-width="3"/>
  <g stroke="#666" stroke-width="2.6">
    <line x1="2185" y1="22.5" x2="2447.5" y2="387.5"/>
    <line x1="2447.5" y1="22.5" x2="2185" y2="387.5"/>
  </g>
  <text x="1746" y="502.3" font-size="23" fill="#2e2e2e" letter-spacing="0.45">Click to zoom</text>
  <circle cx="2315.5" cy="531.6" r="6" fill="#a0a0a0"/>

  <!-- DESIGN SIZE -->
  <rect x="1719" y="567.5" width="1200" height="259" rx="8" fill="#ececec" stroke="#b0b0b0" stroke-width="2"/>
  <path d="M1720,627 L1720,576.5 A8,8 0 0 1 1728,568.5 L2919,568.5 L2919,627 Z" fill="#e6e6e6"/>
  <rect x="1720" y="626" width="1199" height="2" fill="#b0b0b0"/>
  <text x="1742.5" y="605.8" font-size="26" font-weight="700" fill="#3a3a3a">DESIGN SIZE</text>
  <path d="M2870.5,591.5 L2884,605 L2897.5,591.5" fill="none" stroke="#7a7a7a" stroke-width="3.2" stroke-linecap="round" stroke-linejoin="round"/>

  <g font-size="26" fill="#2a2a2a" text-anchor="end" letter-spacing="0.5">
    <text x="1988" y="686">Width:</text>
    <text x="1988" y="780">Height:</text>
  </g>
  <g>
    <rect x="2013.5" y="651" width="263" height="49.5" rx="8" fill="#fff" stroke="#e4e4e4" stroke-width="1"/>
    <rect x="2210" y="654" width="1.5" height="44" fill="#dedede"/>
    <text x="2031" y="686" font-size="24" fill="#111" letter-spacing="0.4">10.00</text>
    <text x="2175" y="686" font-size="24" fill="#111" letter-spacing="0.4">in</text>
    <path d="M2228.5,672 L2242,685.5 L2255.5,672" fill="none" stroke="#8a8a8a" stroke-width="3.2" stroke-linecap="round" stroke-linejoin="round"/>
    <rect x="2013.5" y="745.3" width="263" height="49" rx="8" fill="#fff" stroke="#e4e4e4" stroke-width="1"/>
    <rect x="2210" y="748" width="1.5" height="44" fill="#dedede"/>
    <text x="2031" y="780" font-size="24" fill="#111" letter-spacing="0.4">10.00</text>
    <text x="2175" y="780" font-size="24" fill="#111" letter-spacing="0.4">in</text>
    <path d="M2228.5,766 L2242,779.5 L2255.5,766" fill="none" stroke="#8a8a8a" stroke-width="3.2" stroke-linecap="round" stroke-linejoin="round"/>
  </g>
  <g id="swapArrows" fill="none" stroke="#444" stroke-width="2.7" stroke-linecap="round" stroke-linejoin="round">
    <path d="M2079.4,736 L2079.4,712 M2073.6,717.6 L2079.4,711.8 L2085.2,717.6"/>
    <path d="M2094.4,712 L2094.4,736 M2088.7,730.1 L2094.4,735.8 L2100.2,730.1"/>
  </g>
  <g id="linkIcon" fill="none" stroke="#404040" stroke-width="2.3" stroke-linecap="round">
    <path d="M2301,714.5 L2301,713.3 A5.5,5.5 0 0 1 2312,713.3 L2312,722.4 A5.5,5.5 0 0 1 2301,722.4"/>
    <path d="M2306,723.4 A5.5,5.5 0 0 0 2295,723.5 L2295,732.3 A5.5,5.5 0 0 0 2306,732.3 L2306,731"/>
  </g>

  <!-- OPENINGS -->
  <path d="M1719,1700 L1719,853.6 A8,8 0 0 1 1727,845.6 L2898,845.6 A8,8 0 0 1 2906,853.6 L2906,1700" fill="#ececec" stroke="#b0b0b0" stroke-width="2"/>
  <path d="M1720,905 L1720,854.6 A8,8 0 0 1 1728,846.6 L2897,846.6 A8,8 0 0 1 2905,854.6 L2905,905 Z" fill="#e6e6e6"/>
  <rect x="1720" y="904" width="1186" height="2" fill="#b0b0b0"/>
  <text x="1742.5" y="883.2" font-size="26" font-weight="700" fill="#3a3a3a">OPENINGS</text>
  <text x="2849" y="881.7" font-size="23" fill="#333" text-anchor="end" letter-spacing="0.25">2 openings</text>
  <path d="M2870.5,870.5 L2884,884 L2897.5,870.5" fill="none" stroke="#7a7a7a" stroke-width="3.2" stroke-linecap="round" stroke-linejoin="round"/>

  <g font-size="26" fill="#2a2a2a" letter-spacing="0.5">
    <text x="1988" y="958" text-anchor="end">Opening:</text>
    <text x="2013" y="958">Opening 1</text>
    <text x="1988" y="1023.5" text-anchor="end">Type:</text>
  </g>
  <rect x="2013.5" y="996.5" width="858.5" height="38.8" rx="8" fill="#c8c8c8"/><rect x="2013.5" y="996" width="858.5" height="38.3" rx="8" fill="#fff" stroke="#dcdcdc" stroke-width="1"/>
  <text x="2029.5" y="1023.5" font-size="26" fill="#1a1a1a" letter-spacing="0.5">Graphic Block</text>

  <!-- OPENING SIZE -->
  <rect x="1759.5" y="1065.4" width="1113" height="258.5" rx="8" fill="#ececec" stroke="#b0b0b0" stroke-width="2"/>
  <path d="M1760.5,1125 L1760.5,1074.4 A8,8 0 0 1 1768.5,1066.4 L2863.6,1066.4 A8,8 0 0 1 2871.6,1074.4 L2871.6,1125 Z" fill="#e6e6e6"/>
  <rect x="1760.5" y="1124" width="1111" height="2" fill="#b0b0b0"/>
  <text x="1782.5" y="1103.5" font-size="26" font-weight="700" fill="#3a3a3a">OPENING SIZE</text>
  <path d="M2830.5,1089.5 L2844,1103 L2857.5,1089.5" fill="none" stroke="#7a7a7a" stroke-width="3.2" stroke-linecap="round" stroke-linejoin="round"/>
  <g font-size="26" fill="#2a2a2a" text-anchor="end" letter-spacing="0.5">
    <text x="2028.5" y="1184">Width:</text>
    <text x="2028.5" y="1278">Height:</text>
  </g>
  <g>
    <rect x="2053.5" y="1149.7" width="263" height="48.7" rx="8" fill="#fff" stroke="#e4e4e4" stroke-width="1"/>
    <rect x="2250" y="1152.5" width="1.5" height="44" fill="#dedede"/>
    <text x="2070.5" y="1184" font-size="24" fill="#111" letter-spacing="0.4">10.00</text>
    <text x="2215" y="1184" font-size="24" fill="#111" letter-spacing="0.4">in</text>
    <path d="M2268.5,1170 L2282,1183.5 L2295.5,1170" fill="none" stroke="#8a8a8a" stroke-width="3.2" stroke-linecap="round" stroke-linejoin="round"/>
    <rect x="2053.5" y="1243.3" width="263" height="49" rx="8" fill="#fff" stroke="#e4e4e4" stroke-width="1"/>
    <rect x="2250" y="1246" width="1.5" height="44" fill="#dedede"/>
    <text x="2070.5" y="1278" font-size="24" fill="#111" letter-spacing="0.4">2.271</text>
    <text x="2215" y="1278" font-size="24" fill="#111" letter-spacing="0.4">in</text>
    <path d="M2268.5,1264 L2282,1277.5 L2295.5,1264" fill="none" stroke="#8a8a8a" stroke-width="3.2" stroke-linecap="round" stroke-linejoin="round"/>
  </g>
  <use href="#swapArrows" x="40" y="498.5"/>
  <use href="#linkIcon" x="40" y="498.5"/>

  <!-- OPENING OPTIONS -->
  <rect x="1759.5" y="1343.8" width="1113" height="232.7" rx="8" fill="#ececec" stroke="#b0b0b0" stroke-width="2"/>
  <path d="M1760.5,1403 L1760.5,1352.8 A8,8 0 0 1 1768.5,1344.8 L2863.6,1344.8 A8,8 0 0 1 2871.6,1352.8 L2871.6,1403 Z" fill="#e6e6e6"/>
  <rect x="1760.5" y="1402" width="1111" height="2" fill="#b0b0b0"/>
  <text x="1782.5" y="1380.9" font-size="26" font-weight="700" fill="#3a3a3a">OPENING OPTIONS</text>
  <path d="M2830.5,1368.5 L2844,1382 L2857.5,1368.5" fill="none" stroke="#7a7a7a" stroke-width="3.2" stroke-linecap="round" stroke-linejoin="round"/>
  <g font-size="26" fill="#2a2a2a" text-anchor="end" letter-spacing="0.5">
    <text x="2028.5" y="1457.6">Opacity:</text>
    <text x="2028.5" y="1526.4">Opening Edge:</text>
  </g>
  <rect x="2054" y="1430.7" width="147.7" height="37.7" rx="8" fill="#c8c8c8"/><rect x="2054" y="1430.2" width="147.7" height="37.2" rx="8" fill="#fff" stroke="#d6d6d6" stroke-width="1"/>
  <text x="2069" y="1457.6" font-size="26" fill="#1a1a1a" letter-spacing="0.5">100%</text>
  <rect x="2054" y="1500.5" width="778" height="38" rx="8" fill="#c8c8c8"/><rect x="2054" y="1500" width="778" height="37.5" rx="8" fill="#fff" stroke="#d6d6d6" stroke-width="1"/>
  <text x="2069" y="1526.4" font-size="26" fill="#1a1a1a" letter-spacing="0.5">No Edge Treatment</text>

  <!-- blue steppers -->
  <linearGradient id="blueG" x1="0" y1="0" x2="0" y2="1">
    <stop offset="0" stop-color="#2a8dff"/>
    <stop offset="1" stop-color="#0774ff"/>
  </linearGradient>
  <g id="stepper1">
    <rect x="2836" y="1000" width="32" height="30.5" rx="7" fill="url(#blueG)"/>
    <path d="M2845.5,1011.5 L2852,1005.5 L2858.5,1011.5 M2845.5,1019 L2852,1025 L2858.5,1019" fill="none" stroke="#fff" stroke-width="2.6" stroke-linecap="round" stroke-linejoin="round"/>
  </g>
  <use href="#stepper1" x="-670" y="434"/>
  <use href="#stepper1" x="-40" y="504"/>
</g>
  <!-- annotation arrow (panel) -->
  <g filter="url(#ashadow)" fill="#ff5a4b">
    <path d="M1574,998 L1861.6,1002 L1850.5,982.1 L1907.3,1012 L1849,1040.4 L1861.6,1021.2 L1574,1018 A10,10 0 0 1 1574,998 Z"/>
  </g>
</svg>
</body></html>
